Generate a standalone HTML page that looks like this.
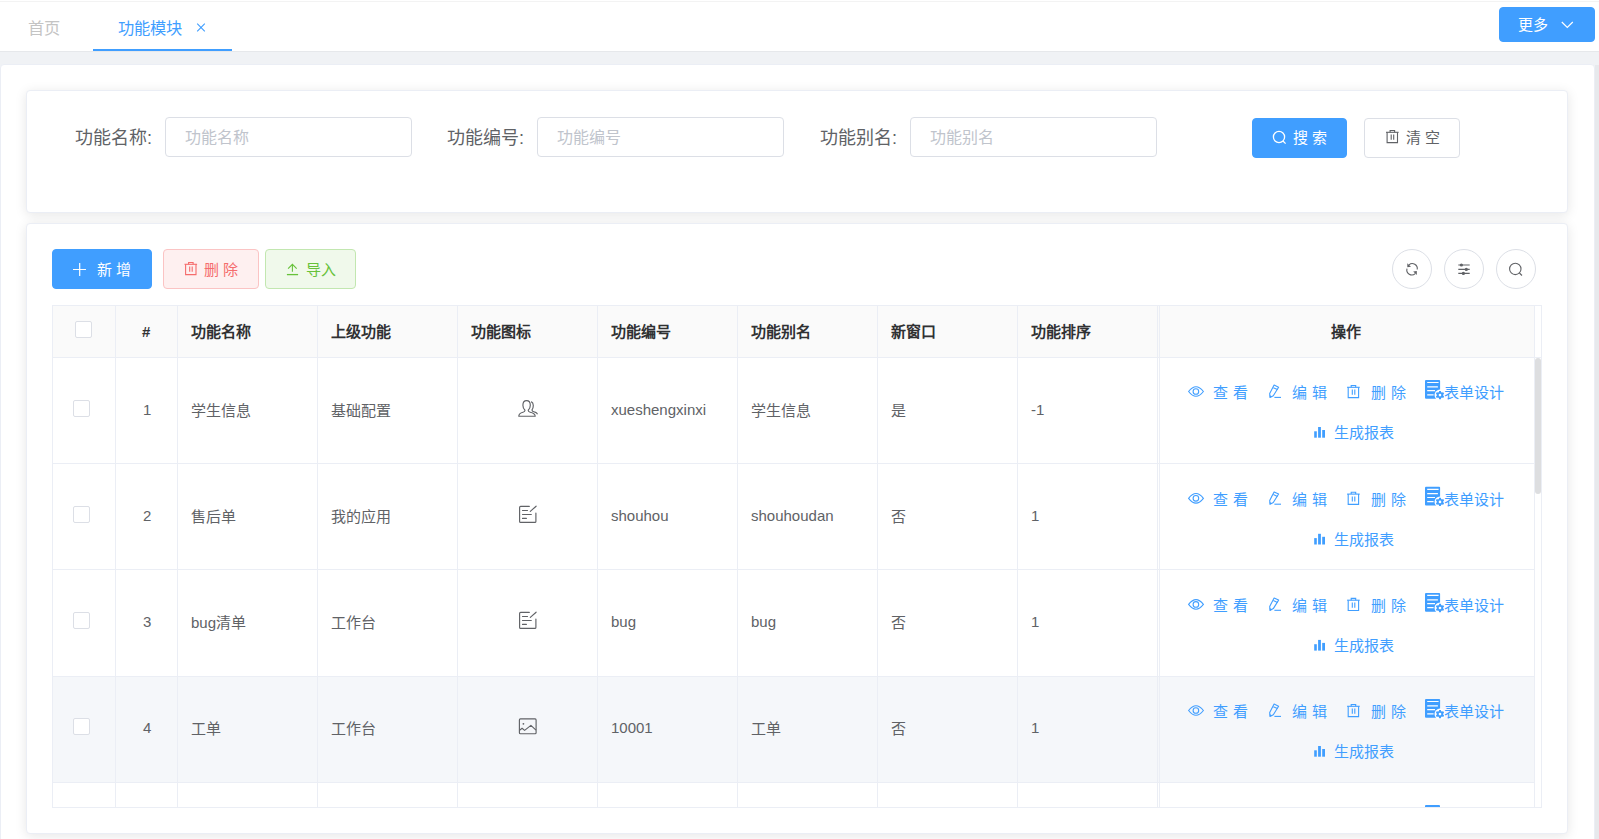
<!DOCTYPE html>
<html lang="zh-CN">
<head>
<meta charset="utf-8">
<style>
*{box-sizing:border-box;margin:0;padding:0}
html,body{width:1599px;height:839px;overflow:hidden}
body{position:relative;background:#f0f2f5;font-family:"Liberation Sans",sans-serif;color:#606266}
.abs{position:absolute}
.t{position:absolute;white-space:nowrap;line-height:1}
.card{position:absolute;background:#fff;border:1px solid #ebeef5;border-radius:4px;box-shadow:0 2px 12px 0 rgba(0,0,0,.1)}
.inp{position:absolute;height:40px;border:1px solid #dcdfe6;border-radius:4px;background:#fff}
.btn{position:absolute;height:40px;border-radius:4px;border:1px solid transparent}
.circ{position:absolute;width:40px;height:40px;border-radius:50%;border:1px solid #dcdfe6;background:#fff}
.vl{position:absolute;width:1px;background:#ebeef5}
.hl{position:absolute;height:1px;background:#ebeef5}
.cb{position:absolute;width:17px;height:17px;border:1px solid #dcdfe6;border-radius:2px;background:#fff}
svg{position:absolute;overflow:visible}
.h{font-size:15px;font-weight:bold;color:#303133}
.c{font-size:15px;color:#606266}
.op{font-size:15px;color:#409eff}
</style>
</head>
<body>

<div class="abs" style="left:0;top:0;width:1599px;height:51px;background:#fff"></div>
<div class="abs" style="left:0;top:1px;width:1599px;height:1px;background:#f3f3f3"></div>
<div class="abs" style="left:0;top:51px;width:1599px;height:1px;background:#e6e8eb"></div>
<div class="t" style="left:28px;top:20px;font-size:16.25px;color:#c4c4c4">首页</div>
<div class="t" style="left:118px;top:20px;font-size:16.25px;color:#409eff">功能模块</div>
<svg style="left:0;top:0" width="1" height="1"><path d="M197.2 23.6 L204.8 31.4 M204.8 23.6 L197.2 31.4" stroke="#409eff" stroke-width="1.1" fill="none"/></svg>
<div class="abs" style="left:93px;top:49px;width:139px;height:2px;background:#409eff"></div>
<div class="btn" style="left:1499px;top:7px;width:96px;height:35px;background:#409eff;border-color:#409eff"></div>
<div class="t" style="left:1518px;top:17px;font-size:15px;color:#fff">更多</div>
<svg style="left:0;top:0" width="1" height="1"><path d="M1561.8 22 L1567.3 27.4 L1572.8 22" stroke="#fff" stroke-width="1.2" fill="none"/></svg>
<div class="abs" style="left:1595px;top:65px;width:4px;height:800px;background:#e7e9ec"></div>
<div class="abs" style="left:0;top:64px;width:1595px;height:900px;background:#fff;border:1px solid #ebeef5;border-radius:4px"></div>
<div class="card" style="left:26px;top:90px;width:1542px;height:123px"></div>
<div class="t" style="left:75px;top:129px;font-size:18px;color:#606266">功能名称:</div>
<div class="inp" style="left:165px;top:117px;width:247px"></div>
<div class="t" style="left:185px;top:130px;font-size:16px;color:#c0c4cc">功能名称</div>
<div class="t" style="left:447px;top:129px;font-size:18px;color:#606266">功能编号:</div>
<div class="inp" style="left:537px;top:117px;width:247px"></div>
<div class="t" style="left:557px;top:130px;font-size:16px;color:#c0c4cc">功能编号</div>
<div class="t" style="left:820px;top:129px;font-size:18px;color:#606266">功能别名:</div>
<div class="inp" style="left:910px;top:117px;width:247px"></div>
<div class="t" style="left:930px;top:130px;font-size:16px;color:#c0c4cc">功能别名</div>
<div class="btn" style="left:1252px;top:118px;width:95px;background:#409eff;border-color:#409eff"></div>
<svg style="left:0;top:0" width="1" height="1"><circle cx="1279" cy="137" r="5.6" stroke="#fff" stroke-width="1.3" fill="none"/><path d="M1283 141 L1285.6 143.6" stroke="#fff" stroke-width="1.3"/></svg>
<div class="t" style="left:1293px;top:130px;font-size:15px;color:#fff;letter-spacing:4px">搜索</div>
<div class="btn" style="left:1364px;top:118px;width:96px;background:#fff;border-color:#dcdfe6"></div>
<svg style="left:0;top:0" width="1" height="1"><g stroke="#606266" stroke-width="1.1" fill="none"><path d="M1386 132.3 H1398.6"/><path d="M1390.1 132.3 V130.5 H1394.6 V132.3"/><path d="M1387.1 132.3 V142.6 H1397.5 V132.3"/><path d="M1391.2 134.6 V139.8 M1393.7 134.6 V139.8"/></g></svg>
<div class="t" style="left:1406px;top:130px;font-size:15px;color:#606266;letter-spacing:4px">清空</div>
<div class="card" style="left:26px;top:223px;width:1542px;height:611px"></div>
<div class="btn" style="left:52px;top:249px;width:100px;background:#409eff;border-color:#409eff"></div>
<svg style="left:0;top:0" width="1" height="1"><path d="M73 269.5 H86 M79.7 263 V276" stroke="#fff" stroke-width="1.2"/></svg>
<div class="t" style="left:97px;top:262px;font-size:15px;color:#fff;letter-spacing:4px">新增</div>
<div class="btn" style="left:163px;top:249px;width:96px;background:#fef0f0;border-color:#fbc4c4"></div>
<svg style="left:0;top:0" width="1" height="1"><g stroke="#f56c6c" stroke-width="1.1" fill="none"><path d="M184.5 264.3 H197.1"/><path d="M188.6 264.3 V262.5 H193.1 V264.3"/><path d="M185.6 264.3 V274.6 H196.0 V264.3"/><path d="M189.7 266.6 V271.8 M192.2 266.6 V271.8"/></g></svg>
<div class="t" style="left:204px;top:262px;font-size:15px;color:#f56c6c;letter-spacing:4px">删除</div>
<div class="btn" style="left:265px;top:249px;width:91px;background:#f0f9eb;border-color:#c2e7b0"></div>
<svg style="left:0;top:0" width="1" height="1"><g stroke="#67c23a" stroke-width="1.1" fill="none"><path d="M288.1 268.6 L292.4 264.3 L296.7 268.6 M292.4 264.5 V271.8"/><path d="M286.9 274.6 H298.1" stroke-width="1.3"/></g></svg>
<div class="t" style="left:306px;top:262px;font-size:15px;color:#67c23a;letter-spacing:0px">导入</div>
<div class="circ" style="left:1392px;top:249px"></div>
<div class="circ" style="left:1444px;top:249px"></div>
<div class="circ" style="left:1496px;top:249px"></div>
<svg style="left:0;top:0" width="1" height="1"><g stroke="#606266" stroke-width="1.1" fill="none"><path d="M1409 264.8 A5 5 0 0 1 1417.2 269.5"/><path d="M1415.2 273.6 A5 5 0 0 1 1407 268.6"/></g><path d="M1407.3 263.2 L1411 266.8 L1407.3 267.2 Z" fill="#606266"/><path d="M1416.8 275 L1413.2 271.4 L1416.8 271 Z" fill="#606266"/></svg>
<svg style="left:0;top:0" width="1" height="1"><g stroke="#606266" stroke-width="1.1" fill="none"><path d="M1458.3 265 H1469.7 M1458.3 269.4 H1469.7 M1458.3 273.4 H1469.7"/></g><circle cx="1461.4" cy="265" r="1.6" fill="#606266"/><circle cx="1466.3" cy="269.4" r="1.6" fill="#606266"/><circle cx="1463.4" cy="273.4" r="1.6" fill="#606266"/></svg>
<svg style="left:0;top:0" width="1" height="1"><circle cx="1515.3" cy="268.9" r="5.7" stroke="#606266" stroke-width="1.1" fill="none"/><path d="M1519.4 273 L1522 275.5" stroke="#606266" stroke-width="1.1"/></svg>
<div class="abs" style="left:52px;top:305px;width:1490px;height:503px;background:#fff"></div>
<div class="abs" style="left:53px;top:306px;width:1481px;height:51px;background:#fafafa"></div>
<div class="abs" style="left:53px;top:677px;width:1481px;height:105px;background:#f5f7fa"></div>
<div class="hl" style="left:52px;top:305px;width:1490px"></div>
<div class="hl" style="left:52px;top:807px;width:1490px"></div>
<div class="vl" style="left:52px;top:305px;height:503px"></div>
<div class="vl" style="left:1541px;top:305px;height:503px"></div>
<div class="hl" style="left:52px;top:357px;width:1483px"></div>
<div class="hl" style="left:52px;top:463px;width:1483px"></div>
<div class="hl" style="left:52px;top:569px;width:1483px"></div>
<div class="hl" style="left:52px;top:676px;width:1483px"></div>
<div class="hl" style="left:52px;top:782px;width:1483px"></div>
<div class="hl" style="left:1534px;top:357px;width:8px"></div>
<div class="vl" style="left:115px;top:305px;height:503px"></div>
<div class="vl" style="left:177px;top:305px;height:503px"></div>
<div class="vl" style="left:317px;top:305px;height:503px"></div>
<div class="vl" style="left:457px;top:305px;height:503px"></div>
<div class="vl" style="left:597px;top:305px;height:503px"></div>
<div class="vl" style="left:737px;top:305px;height:503px"></div>
<div class="vl" style="left:877px;top:305px;height:503px"></div>
<div class="vl" style="left:1017px;top:305px;height:503px"></div>
<div class="vl" style="left:1157px;top:305px;height:503px"></div>
<div class="vl" style="left:1159px;top:305px;height:503px"></div>
<div class="vl" style="left:1534px;top:305px;height:503px"></div>
<div class="abs" style="left:1535px;top:358px;width:6px;height:136px;background:#dddee0;border-radius:3px"></div>
<div class="cb" style="left:75px;top:321px"></div>
<div class="t h" style="left:142px;top:324px">#</div>
<div class="t h" style="left:191px;top:324px">功能名称</div>
<div class="t h" style="left:331px;top:324px">上级功能</div>
<div class="t h" style="left:471px;top:324px">功能图标</div>
<div class="t h" style="left:611px;top:324px">功能编号</div>
<div class="t h" style="left:751px;top:324px">功能别名</div>
<div class="t h" style="left:891px;top:324px">新窗口</div>
<div class="t h" style="left:1031px;top:324px">功能排序</div>
<div class="t h" style="left:1331px;top:324px">操作</div>
<div class="cb" style="left:73px;top:400px"></div>
<div class="t c" style="left:143px;top:401.7px">1</div>
<div class="t c" style="left:191px;top:402.7px">学生信息</div>
<div class="t c" style="left:331px;top:402.7px">基础配置</div>
<svg style="left:518px;top:399.7px" width="20" height="18"><g stroke="#606266" stroke-width="1.15" fill="none" stroke-linejoin="round"><path d="M0.8 16.2 C0.8 13.6 2.4 12.8 5 12.2 C6.6 11.8 7 11.2 7 10.2 C5.6 9 4.9 7.4 4.9 5.2 C4.9 2 6.6 0.6 8.6 0.6 C10.6 0.6 12.3 2 12.3 5.2 C12.3 7.4 11.6 9 10.2 10.2 C10.2 11.2 10.6 11.8 12.2 12.2 C14.8 12.8 17.2 13.6 17.2 16.2 Z"/><path d="M13.2 1.6 C14.6 2.2 15.3 3.5 15.3 5.6 C15.3 7.5 14.8 8.9 14 9.9 C14 10.8 14.4 11.3 15.8 11.7 C17.6 12.2 19.4 12.8 19.4 14.2"/></g></svg>
<div class="t c" style="left:611px;top:401.7px">xueshengxinxi</div>
<div class="t c" style="left:751px;top:402.7px">学生信息</div>
<div class="t c" style="left:891px;top:402.7px">是</div>
<div class="t c" style="left:1031px;top:401.7px">-1</div>
<svg style="left:0;top:0" width="1" height="1"><g stroke="#409eff" stroke-width="1.1" fill="none"><path d="M1188.6 391.5 Q1196 381.9 1203.4 391.5 Q1196 401.1 1188.6 391.5 Z"/><circle cx="1195.9" cy="391.5" r="2.8"/></g></svg>
<div class="t op" style="left:1213px;top:385.0px;letter-spacing:5px">查看</div>
<svg style="left:0;top:0" width="1" height="1"><g stroke="#409eff" stroke-width="1.1" fill="none" stroke-linejoin="round"><path d="M1274.1 385.1 L1278.6 387.2 L1273.3 395.7 L1270 397.5 L1269.7 393.6 Z"/><path d="M1273.3 387.7 L1277.5 389.6"/><path d="M1274.4 397.4 H1281"/></g><path d="M1269.7 395.1 L1272 396.4 L1270 397.5 Z" fill="#409eff"/></svg>
<div class="t op" style="left:1292px;top:385.0px;letter-spacing:5px">编辑</div>
<svg style="left:0;top:0" width="1" height="1"><g stroke="#409eff" stroke-width="1.1" fill="none"><path d="M1347.1 387.3 H1359.6999999999998"/><path d="M1351.1999999999998 387.3 V385.5 H1355.6999999999998 V387.3"/><path d="M1348.1999999999998 387.3 V397.6 H1358.6 V387.3"/><path d="M1352.3 389.6 V394.8 M1354.8 389.6 V394.8"/></g></svg>
<div class="t op" style="left:1371px;top:385.0px;letter-spacing:5px">删除</div>
<svg style="left:0;top:0" width="1" height="1"><rect x="1425" y="380.0" width="15.1" height="18.8" rx="1" fill="#409eff"/><path d="M1427.2 382.5 H1438.6 M1427.2 386.9 H1437.9 M1427.2 390.7 H1435 M1427.2 394.8 H1433.6" stroke="#fff" stroke-width="1.2"/><circle cx="1440" cy="395.1" r="5.5" fill="#fff"/><path d="M1438.80 392.13 L1439.18 390.88 L1440.82 390.88 L1441.20 392.13 L1441.97 392.58 L1443.25 392.28 L1444.07 393.70 L1443.17 394.65 L1443.17 395.55 L1444.07 396.50 L1443.25 397.92 L1441.97 397.62 L1441.20 398.07 L1440.82 399.32 L1439.18 399.32 L1438.80 398.07 L1438.03 397.62 L1436.75 397.92 L1435.93 396.50 L1436.83 395.55 L1436.83 394.65 L1435.93 393.70 L1436.75 392.28 L1438.03 392.58 Z" fill="#409eff"/><circle cx="1440" cy="395.1" r="1.3" fill="#fff"/></svg>
<div class="t op" style="left:1444px;top:385.0px">表单设计</div>
<svg style="left:0;top:0" width="1" height="1"><g fill="#409eff"><rect x="1314.2" y="431.3" width="2.6" height="6.4"/><rect x="1318.1" y="427.0" width="2.8" height="10.7"/><rect x="1322.2" y="430.0" width="2.8" height="7.7"/></g></svg>
<div class="t op" style="left:1334px;top:425.0px">生成报表</div>
<div class="cb" style="left:73px;top:506px"></div>
<div class="t c" style="left:143px;top:507.6px">2</div>
<div class="t c" style="left:191px;top:508.6px">售后单</div>
<div class="t c" style="left:331px;top:508.6px">我的应用</div>
<svg style="left:510px;top:500.1px" width="35" height="30"><g stroke="#606266" stroke-width="1.15" fill="none" stroke-linecap="round"><path d="M19.3 6.4 H10.6 Q9.6 6.4 9.6 7.4 V21.4 Q9.6 22.4 10.6 22.4 H24.9 Q25.9 22.4 25.9 21.4 V13"/><path d="M20.3 11.4 L26.1 6.2"/><path d="M12.5 10.5 H17.5 M12.5 14.5 H21.3 M12.5 18.4 H16.4"/></g></svg>
<div class="t c" style="left:611px;top:507.6px">shouhou</div>
<div class="t c" style="left:751px;top:507.6px">shouhoudan</div>
<div class="t c" style="left:891px;top:508.6px">否</div>
<div class="t c" style="left:1031px;top:507.6px">1</div>
<svg style="left:0;top:0" width="1" height="1"><g stroke="#409eff" stroke-width="1.1" fill="none"><path d="M1188.6 498.3 Q1196 488.7 1203.4 498.3 Q1196 507.90000000000003 1188.6 498.3 Z"/><circle cx="1195.9" cy="498.3" r="2.8"/></g></svg>
<div class="t op" style="left:1213px;top:491.8px;letter-spacing:5px">查看</div>
<svg style="left:0;top:0" width="1" height="1"><g stroke="#409eff" stroke-width="1.1" fill="none" stroke-linejoin="round"><path d="M1274.1 491.90000000000003 L1278.6 494.0 L1273.3 502.5 L1270 504.3 L1269.7 500.40000000000003 Z"/><path d="M1273.3 494.5 L1277.5 496.40000000000003"/><path d="M1274.4 504.2 H1281"/></g><path d="M1269.7 501.90000000000003 L1272 503.2 L1270 504.3 Z" fill="#409eff"/></svg>
<div class="t op" style="left:1292px;top:491.8px;letter-spacing:5px">编辑</div>
<svg style="left:0;top:0" width="1" height="1"><g stroke="#409eff" stroke-width="1.1" fill="none"><path d="M1347.1 494.1 H1359.6999999999998"/><path d="M1351.1999999999998 494.1 V492.3 H1355.6999999999998 V494.1"/><path d="M1348.1999999999998 494.1 V504.40000000000003 H1358.6 V494.1"/><path d="M1352.3 496.40000000000003 V501.6 M1354.8 496.40000000000003 V501.6"/></g></svg>
<div class="t op" style="left:1371px;top:491.8px;letter-spacing:5px">删除</div>
<svg style="left:0;top:0" width="1" height="1"><rect x="1425" y="486.8" width="15.1" height="18.8" rx="1" fill="#409eff"/><path d="M1427.2 489.3 H1438.6 M1427.2 493.7 H1437.9 M1427.2 497.5 H1435 M1427.2 501.6 H1433.6" stroke="#fff" stroke-width="1.2"/><circle cx="1440" cy="501.90000000000003" r="5.5" fill="#fff"/><path d="M1438.80 498.93 L1439.18 497.68 L1440.82 497.68 L1441.20 498.93 L1441.97 499.38 L1443.25 499.08 L1444.07 500.50 L1443.17 501.45 L1443.17 502.35 L1444.07 503.30 L1443.25 504.72 L1441.97 504.42 L1441.20 504.87 L1440.82 506.12 L1439.18 506.12 L1438.80 504.87 L1438.03 504.42 L1436.75 504.72 L1435.93 503.30 L1436.83 502.35 L1436.83 501.45 L1435.93 500.50 L1436.75 499.08 L1438.03 499.38 Z" fill="#409eff"/><circle cx="1440" cy="501.90000000000003" r="1.3" fill="#fff"/></svg>
<div class="t op" style="left:1444px;top:491.8px">表单设计</div>
<svg style="left:0;top:0" width="1" height="1"><g fill="#409eff"><rect x="1314.2" y="538.0999999999999" width="2.6" height="6.4"/><rect x="1318.1" y="533.8" width="2.8" height="10.7"/><rect x="1322.2" y="536.8" width="2.8" height="7.7"/></g></svg>
<div class="t op" style="left:1334px;top:531.8px">生成报表</div>
<div class="cb" style="left:73px;top:612px"></div>
<div class="t c" style="left:143px;top:613.6px">3</div>
<div class="t c" style="left:191px;top:614.6px">bug清单</div>
<div class="t c" style="left:331px;top:614.6px">工作台</div>
<svg style="left:510px;top:606.1px" width="35" height="30"><g stroke="#606266" stroke-width="1.15" fill="none" stroke-linecap="round"><path d="M19.3 6.4 H10.6 Q9.6 6.4 9.6 7.4 V21.4 Q9.6 22.4 10.6 22.4 H24.9 Q25.9 22.4 25.9 21.4 V13"/><path d="M20.3 11.4 L26.1 6.2"/><path d="M12.5 10.5 H17.5 M12.5 14.5 H21.3 M12.5 18.4 H16.4"/></g></svg>
<div class="t c" style="left:611px;top:613.6px">bug</div>
<div class="t c" style="left:751px;top:613.6px">bug</div>
<div class="t c" style="left:891px;top:614.6px">否</div>
<div class="t c" style="left:1031px;top:613.6px">1</div>
<svg style="left:0;top:0" width="1" height="1"><g stroke="#409eff" stroke-width="1.1" fill="none"><path d="M1188.6 604.4 Q1196 594.8 1203.4 604.4 Q1196 614.0 1188.6 604.4 Z"/><circle cx="1195.9" cy="604.4" r="2.8"/></g></svg>
<div class="t op" style="left:1213px;top:597.9px;letter-spacing:5px">查看</div>
<svg style="left:0;top:0" width="1" height="1"><g stroke="#409eff" stroke-width="1.1" fill="none" stroke-linejoin="round"><path d="M1274.1 598.0 L1278.6 600.1 L1273.3 608.6 L1270 610.4 L1269.7 606.5 Z"/><path d="M1273.3 600.6 L1277.5 602.5"/><path d="M1274.4 610.3 H1281"/></g><path d="M1269.7 608.0 L1272 609.3 L1270 610.4 Z" fill="#409eff"/></svg>
<div class="t op" style="left:1292px;top:597.9px;letter-spacing:5px">编辑</div>
<svg style="left:0;top:0" width="1" height="1"><g stroke="#409eff" stroke-width="1.1" fill="none"><path d="M1347.1 600.1999999999999 H1359.6999999999998"/><path d="M1351.1999999999998 600.1999999999999 V598.4 H1355.6999999999998 V600.1999999999999"/><path d="M1348.1999999999998 600.1999999999999 V610.5 H1358.6 V600.1999999999999"/><path d="M1352.3 602.5 V607.6999999999999 M1354.8 602.5 V607.6999999999999"/></g></svg>
<div class="t op" style="left:1371px;top:597.9px;letter-spacing:5px">删除</div>
<svg style="left:0;top:0" width="1" height="1"><rect x="1425" y="592.9" width="15.1" height="18.8" rx="1" fill="#409eff"/><path d="M1427.2 595.4 H1438.6 M1427.2 599.8 H1437.9 M1427.2 603.6 H1435 M1427.2 607.6999999999999 H1433.6" stroke="#fff" stroke-width="1.2"/><circle cx="1440" cy="608.0" r="5.5" fill="#fff"/><path d="M1438.80 605.03 L1439.18 603.78 L1440.82 603.78 L1441.20 605.03 L1441.97 605.48 L1443.25 605.18 L1444.07 606.60 L1443.17 607.55 L1443.17 608.45 L1444.07 609.40 L1443.25 610.82 L1441.97 610.52 L1441.20 610.97 L1440.82 612.22 L1439.18 612.22 L1438.80 610.97 L1438.03 610.52 L1436.75 610.82 L1435.93 609.40 L1436.83 608.45 L1436.83 607.55 L1435.93 606.60 L1436.75 605.18 L1438.03 605.48 Z" fill="#409eff"/><circle cx="1440" cy="608.0" r="1.3" fill="#fff"/></svg>
<div class="t op" style="left:1444px;top:597.9px">表单设计</div>
<svg style="left:0;top:0" width="1" height="1"><g fill="#409eff"><rect x="1314.2" y="644.1999999999999" width="2.6" height="6.4"/><rect x="1318.1" y="639.9" width="2.8" height="10.7"/><rect x="1322.2" y="642.9" width="2.8" height="7.7"/></g></svg>
<div class="t op" style="left:1334px;top:637.9px">生成报表</div>
<div class="cb" style="left:73px;top:718px"></div>
<div class="t c" style="left:143px;top:719.6px">4</div>
<div class="t c" style="left:191px;top:720.6px">工单</div>
<div class="t c" style="left:331px;top:720.6px">工作台</div>
<svg style="left:510px;top:711.6px" width="35" height="30"><g stroke="#606266" stroke-width="1.15" fill="none" stroke-linejoin="round"><rect x="9.4" y="6.9" width="16.7" height="14.8" rx="1"/><path d="M9.6 18.2 L12.1 16.3 L14.6 18.4 L20.9 13.4 L26 18.2"/></g><circle cx="13.4" cy="11.8" r="0.9" fill="#606266"/></svg>
<div class="t c" style="left:611px;top:719.6px">10001</div>
<div class="t c" style="left:751px;top:720.6px">工单</div>
<div class="t c" style="left:891px;top:720.6px">否</div>
<div class="t c" style="left:1031px;top:719.6px">1</div>
<svg style="left:0;top:0" width="1" height="1"><g stroke="#409eff" stroke-width="1.1" fill="none"><path d="M1188.6 710.5 Q1196 700.9 1203.4 710.5 Q1196 720.1 1188.6 710.5 Z"/><circle cx="1195.9" cy="710.5" r="2.8"/></g></svg>
<div class="t op" style="left:1213px;top:704.0px;letter-spacing:5px">查看</div>
<svg style="left:0;top:0" width="1" height="1"><g stroke="#409eff" stroke-width="1.1" fill="none" stroke-linejoin="round"><path d="M1274.1 704.1 L1278.6 706.2 L1273.3 714.7 L1270 716.5 L1269.7 712.6 Z"/><path d="M1273.3 706.7 L1277.5 708.6"/><path d="M1274.4 716.4 H1281"/></g><path d="M1269.7 714.1 L1272 715.4 L1270 716.5 Z" fill="#409eff"/></svg>
<div class="t op" style="left:1292px;top:704.0px;letter-spacing:5px">编辑</div>
<svg style="left:0;top:0" width="1" height="1"><g stroke="#409eff" stroke-width="1.1" fill="none"><path d="M1347.1 706.3 H1359.6999999999998"/><path d="M1351.1999999999998 706.3 V704.5 H1355.6999999999998 V706.3"/><path d="M1348.1999999999998 706.3 V716.6 H1358.6 V706.3"/><path d="M1352.3 708.6 V713.8 M1354.8 708.6 V713.8"/></g></svg>
<div class="t op" style="left:1371px;top:704.0px;letter-spacing:5px">删除</div>
<svg style="left:0;top:0" width="1" height="1"><rect x="1425" y="699.0" width="15.1" height="18.8" rx="1" fill="#409eff"/><path d="M1427.2 701.5 H1438.6 M1427.2 705.9 H1437.9 M1427.2 709.7 H1435 M1427.2 713.8 H1433.6" stroke="#fff" stroke-width="1.2"/><circle cx="1440" cy="714.1" r="5.5" fill="#fff"/><path d="M1438.80 711.13 L1439.18 709.88 L1440.82 709.88 L1441.20 711.13 L1441.97 711.58 L1443.25 711.28 L1444.07 712.70 L1443.17 713.65 L1443.17 714.55 L1444.07 715.50 L1443.25 716.92 L1441.97 716.62 L1441.20 717.07 L1440.82 718.32 L1439.18 718.32 L1438.80 717.07 L1438.03 716.62 L1436.75 716.92 L1435.93 715.50 L1436.83 714.55 L1436.83 713.65 L1435.93 712.70 L1436.75 711.28 L1438.03 711.58 Z" fill="#409eff"/><circle cx="1440" cy="714.1" r="1.3" fill="#fff"/></svg>
<div class="t op" style="left:1444px;top:704.0px">表单设计</div>
<svg style="left:0;top:0" width="1" height="1"><g fill="#409eff"><rect x="1314.2" y="750.3" width="2.6" height="6.4"/><rect x="1318.1" y="746.0" width="2.8" height="10.7"/><rect x="1322.2" y="749.0" width="2.8" height="7.7"/></g></svg>
<div class="t op" style="left:1334px;top:744.0px">生成报表</div>
<div class="abs" style="left:1425px;top:805px;width:15px;height:2px;background:#409eff;border-radius:1px 1px 0 0"></div>
</body></html>
